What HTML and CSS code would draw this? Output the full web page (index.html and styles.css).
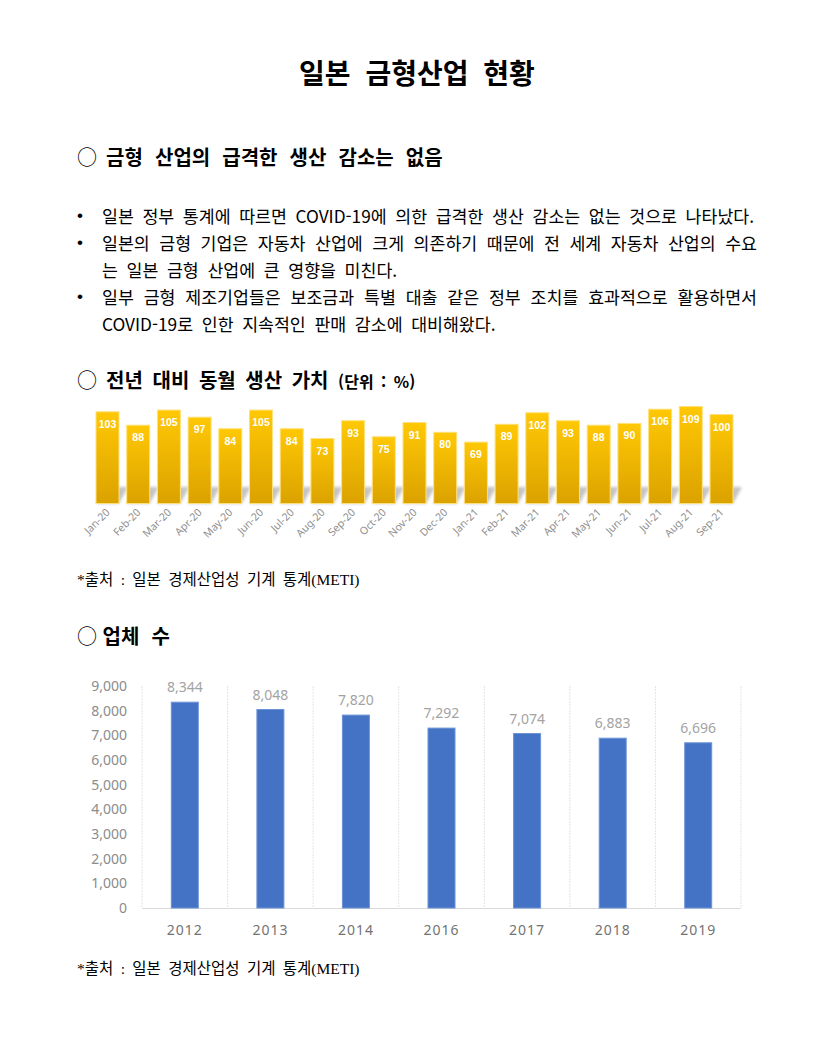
FILE: index.html
```html
<!DOCTYPE html>
<html lang="ko">
<head>
<meta charset="utf-8">
<title>일본 금형산업 현황</title>
<link rel="stylesheet" href="styles.css">
</head>
<body>
<div class="page">
  <h1 class="title">일본 금형산업 현황</h1>

  <h2 class="heading h-first"><span class="circle">○ </span>금형 산업의 급격한 생산 감소는 없음</h2>

  <ul class="bullets">
    <li>일본 정부 통계에 따르면 COVID-19에 의한 급격한 생산 감소는 없는 것으로 나타났다.</li>
    <li>일본의 금형 기업은 자동차 산업에 크게 의존하기 때문에 전 세계 자동차 산업의 수요는 일본 금형 산업에 큰 영향을 미친다.</li>
    <li>일부 금형 제조기업들은 보조금과 특별 대출 같은 정부 조치를 효과적으로 활용하면서 COVID-19로 인한 지속적인 판매 감소에 대비해왔다.</li>
  </ul>

  <h2 class="heading h-second"><span class="circle">○ </span>전년 대비 동월 생산 가치 <span class="unit">(단위 : %)</span></h2>

  <svg class="chart chart1" width="680" height="150" viewBox="0 0 680 150">
    <defs>
      <linearGradient id="gold" x1="0" y1="0" x2="0" y2="1">
        <stop offset="0" stop-color="#FFC804"/>
        <stop offset="1" stop-color="#DBA200"/>
      </linearGradient>
      <filter id="blur" x="-20%" y="-40%" width="140%" height="180%">
        <feGaussianBlur stdDeviation="1.6"/>
      </filter>
    </defs>
    <g class="shadows" filter="url(#blur)">
      <polygon points="16,103.5 39,103.5 48,87 25,87"/>
      <polygon points="46.7,103.5 69.7,103.5 78.7,87 55.7,87"/>
      <polygon points="77.4,103.5 100.4,103.5 109.4,87 86.4,87"/>
      <polygon points="108.1,103.5 131.1,103.5 140.1,87 117.1,87"/>
      <polygon points="138.8,103.5 161.8,103.5 170.8,87 147.8,87"/>
      <polygon points="169.5,103.5 192.5,103.5 201.5,87 178.5,87"/>
      <polygon points="200.2,103.5 223.2,103.5 232.2,87 209.2,87"/>
      <polygon points="230.9,103.5 253.9,103.5 262.9,87 239.9,87"/>
      <polygon points="261.6,103.5 284.6,103.5 293.6,87 270.6,87"/>
      <polygon points="292.3,103.5 315.3,103.5 324.3,87 301.3,87"/>
      <polygon points="323,103.5 346,103.5 355,87 332,87"/>
      <polygon points="353.7,103.5 376.7,103.5 385.7,87 362.7,87"/>
      <polygon points="384.4,103.5 407.4,103.5 416.4,87 393.4,87"/>
      <polygon points="415.1,103.5 438.1,103.5 447.1,87 424.1,87"/>
      <polygon points="445.8,103.5 468.8,103.5 477.8,87 454.8,87"/>
      <polygon points="476.5,103.5 499.5,103.5 508.5,87 485.5,87"/>
      <polygon points="507.2,103.5 530.2,103.5 539.2,87 516.2,87"/>
      <polygon points="537.9,103.5 560.9,103.5 569.9,87 546.9,87"/>
      <polygon points="568.6,103.5 591.6,103.5 600.6,87 577.6,87"/>
      <polygon points="599.3,103.5 622.3,103.5 631.3,87 608.3,87"/>
      <polygon points="630,103.5 653,103.5 662,87 639,87"/>
    </g>
    <g class="gold-bars">
      <rect x="16" y="11.8" width="23" height="91.7"/>
      <rect x="46.7" y="25.2" width="23" height="78.3"/>
      <rect x="77.4" y="10.05" width="23" height="93.45"/>
      <rect x="108.1" y="17.2" width="23" height="86.3"/>
      <rect x="138.8" y="28.7" width="23" height="74.8"/>
      <rect x="169.5" y="10.05" width="23" height="93.45"/>
      <rect x="200.2" y="28.7" width="23" height="74.8"/>
      <rect x="230.9" y="38.5" width="23" height="65"/>
      <rect x="261.6" y="20.7" width="23" height="82.8"/>
      <rect x="292.3" y="36.75" width="23" height="66.75"/>
      <rect x="323" y="22.5" width="23" height="81"/>
      <rect x="353.7" y="32.3" width="23" height="71.2"/>
      <rect x="384.4" y="42.1" width="23" height="61.4"/>
      <rect x="415.1" y="24.3" width="23" height="79.2"/>
      <rect x="445.8" y="12.7" width="23" height="90.8"/>
      <rect x="476.5" y="20.7" width="23" height="82.8"/>
      <rect x="507.2" y="25.2" width="23" height="78.3"/>
      <rect x="537.9" y="23.4" width="23" height="80.1"/>
      <rect x="568.6" y="9.2" width="23" height="94.3"/>
      <rect x="599.3" y="6.5" width="23" height="97"/>
      <rect x="630" y="14.5" width="23" height="89"/>
    </g>
    <g class="bar-values">
      <text x="27.5" y="27.8">103</text>
      <text x="58.2" y="41.2">88</text>
      <text x="88.9" y="26">105</text>
      <text x="119.6" y="33.2">97</text>
      <text x="150.3" y="44.7">84</text>
      <text x="181" y="26">105</text>
      <text x="211.7" y="44.7">84</text>
      <text x="242.4" y="54.5">73</text>
      <text x="273.1" y="36.7">93</text>
      <text x="303.8" y="52.7">75</text>
      <text x="334.5" y="38.5">91</text>
      <text x="365.2" y="48.3">80</text>
      <text x="395.9" y="58.1">69</text>
      <text x="426.6" y="40.3">89</text>
      <text x="457.3" y="28.7">102</text>
      <text x="488" y="36.7">93</text>
      <text x="518.7" y="41.2">88</text>
      <text x="549.4" y="39.4">90</text>
      <text x="580.1" y="25.2">106</text>
      <text x="610.8" y="22.5">109</text>
      <text x="641.5" y="30.5">100</text>
    </g>
    <g class="months">
      <text transform="translate(30.5,113) rotate(-45)">Jan-20</text>
      <text transform="translate(61.2,113) rotate(-45)">Feb-20</text>
      <text transform="translate(91.9,113) rotate(-45)">Mar-20</text>
      <text transform="translate(122.6,113) rotate(-45)">Apr-20</text>
      <text transform="translate(153.3,113) rotate(-45)">May-20</text>
      <text transform="translate(184,113) rotate(-45)">Jun-20</text>
      <text transform="translate(214.7,113) rotate(-45)">Jul-20</text>
      <text transform="translate(245.4,113) rotate(-45)">Aug-20</text>
      <text transform="translate(276.1,113) rotate(-45)">Sep-20</text>
      <text transform="translate(306.8,113) rotate(-45)">Oct-20</text>
      <text transform="translate(337.5,113) rotate(-45)">Nov-20</text>
      <text transform="translate(368.2,113) rotate(-45)">Dec-20</text>
      <text transform="translate(398.9,113) rotate(-45)">Jan-21</text>
      <text transform="translate(429.6,113) rotate(-45)">Feb-21</text>
      <text transform="translate(460.3,113) rotate(-45)">Mar-21</text>
      <text transform="translate(491,113) rotate(-45)">Apr-21</text>
      <text transform="translate(521.7,113) rotate(-45)">May-21</text>
      <text transform="translate(552.4,113) rotate(-45)">Jun-21</text>
      <text transform="translate(583.1,113) rotate(-45)">Jul-21</text>
      <text transform="translate(613.8,113) rotate(-45)">Aug-21</text>
      <text transform="translate(644.5,113) rotate(-45)">Sep-21</text>
    </g>
  </svg>

  <p class="source">*출처 : 일본 경제산업성 기계 통계(METI)</p>

  <h2 class="heading h-third"><span class="circle tight">○ </span>업체 수</h2>

  <svg class="chart chart2" width="680" height="280" viewBox="0 0 680 280">
    <g class="vgrid">
      <line x1="62" y1="16" x2="62" y2="238"/>
      <line x1="147.6" y1="16" x2="147.6" y2="238"/>
      <line x1="233.1" y1="16" x2="233.1" y2="238"/>
      <line x1="318.7" y1="16" x2="318.7" y2="238"/>
      <line x1="404.3" y1="16" x2="404.3" y2="238"/>
      <line x1="489.9" y1="16" x2="489.9" y2="238"/>
      <line x1="575.4" y1="16" x2="575.4" y2="238"/>
      <line x1="661" y1="16" x2="661" y2="238"/>
    </g>
    <line class="baseline" x1="62" y1="238.5" x2="661" y2="238.5"/>
    <g class="y-labels">
      <text x="47" y="21">9,000</text>
      <text x="47" y="45.7">8,000</text>
      <text x="47" y="70.3">7,000</text>
      <text x="47" y="95">6,000</text>
      <text x="47" y="119.7">5,000</text>
      <text x="47" y="144.3">4,000</text>
      <text x="47" y="169">3,000</text>
      <text x="47" y="193.7">2,000</text>
      <text x="47" y="218.3">1,000</text>
      <text x="47" y="243">0</text>
    </g>
    <g class="blue-bars">
      <rect x="91.3" y="32.2" width="27" height="205.8"/>
      <rect x="176.9" y="39.5" width="27" height="198.5"/>
      <rect x="262.4" y="45.1" width="27" height="192.9"/>
      <rect x="348" y="58.1" width="27" height="179.9"/>
      <rect x="433.6" y="63.5" width="27" height="174.5"/>
      <rect x="519.2" y="68.2" width="27" height="169.8"/>
      <rect x="604.7" y="72.8" width="27" height="165.2"/>
    </g>
    <g class="value-labels">
      <text x="104.8" y="22.2">8,344</text>
      <text x="190.4" y="29.5">8,048</text>
      <text x="275.9" y="35.1">7,820</text>
      <text x="361.5" y="48.1">7,292</text>
      <text x="447.1" y="53.5">7,074</text>
      <text x="532.7" y="58.2">6,883</text>
      <text x="618.2" y="62.8">6,696</text>
    </g>
    <g class="years">
      <text x="104.8" y="265">2012</text>
      <text x="190.4" y="265">2013</text>
      <text x="275.9" y="265">2014</text>
      <text x="361.5" y="265">2016</text>
      <text x="447.1" y="265">2017</text>
      <text x="532.7" y="265">2018</text>
      <text x="618.2" y="265">2019</text>
    </g>
  </svg>

  <p class="source">*출처 : 일본 경제산업성 기계 통계(METI)</p>
</div>
</body>
</html>
```

FILE: styles.css
```css
* {
  box-sizing: border-box;
}

html, body {
  margin: 0;
  padding: 0;
  background: #ffffff;
}

body {
  font-family: "Noto Sans CJK KR", "Noto Sans", sans-serif;
  color: #000000;
}

.page {
  width: 839px;
  padding: 0 82px 0 77px;
}

.title {
  margin: 52px 0 0;
  font-size: 28px;
  line-height: 40px;
  font-weight: 700;
  text-align: center;
  word-spacing: 7px;
}

.heading {
  margin: 0;
  font-size: 20px;
  line-height: 30px;
  font-weight: 700;
  word-spacing: 6.5px;
}

.heading .circle {
  font-weight: 400;
  word-spacing: 3.5px;
}

.heading .circle.tight {
  word-spacing: 0;
}

.h-first {
  margin-top: 50px;
}

.h-second {
  margin-top: 28px;
  word-spacing: 4px;
}

.h-third {
  margin-top: 31px;
}

.unit {
  font-size: 16px;
  word-spacing: 3px;
}

.bullets {
  list-style: none;
  margin: 30px 0 0;
  padding: 0;
  font-size: 17.3px;
  line-height: 27px;
  word-spacing: 3.8px;
  text-align: justify;
}

.bullets li {
  display: grid;
  grid-template-columns: 25px 1fr;
}

.bullets li::before {
  content: "•";
  font-family: "Liberation Sans", sans-serif;
  font-size: 17px;
}

.chart {
  display: block;
  margin-left: 3px;
  overflow: visible;
}

.chart1 {
  margin-top: 4px;
}

.chart2 {
  margin-top: 19px;
}

.shadows polygon {
  fill: #c4c4c4;
}

.gold-bars rect {
  fill: url(#gold);
  stroke: #ffe07c;
  stroke-width: 1;
}

.bar-values text {
  font-family: "Liberation Sans", sans-serif;
  font-size: 10.5px;
  font-weight: 700;
  fill: #ffffff;
  text-anchor: middle;
}

.months text {
  font-family: "Noto Sans", sans-serif;
  font-size: 10.5px;
  fill: #8f8f8f;
  text-anchor: end;
}

.source {
  margin: 20px 0 0;
  font-family: "Liberation Serif", "Noto Sans CJK KR", serif;
  font-size: 15.5px;
  line-height: 20px;
  word-spacing: 3.5px;
}

.chart2 + .source {
  margin-top: 9px;
}

.vgrid line {
  stroke: #e4e4e4;
  stroke-width: 1;
  stroke-dasharray: 2 1;
}

.baseline {
  stroke: #d9d9d9;
  stroke-width: 1;
}

.y-labels text {
  font-family: "Noto Sans", sans-serif;
  font-size: 14px;
  fill: #8c8c8c;
  text-anchor: end;
}

.blue-bars rect {
  fill: #4472c4;
  stroke: #6b93d6;
  stroke-width: 1;
}

.value-labels text {
  font-family: "Noto Sans", sans-serif;
  font-size: 14px;
  fill: #a3a3a3;
  text-anchor: middle;
}

.years text {
  font-family: "Noto Sans", sans-serif;
  font-size: 14px;
  fill: #737373;
  text-anchor: middle;
  letter-spacing: 1px;
}
```
